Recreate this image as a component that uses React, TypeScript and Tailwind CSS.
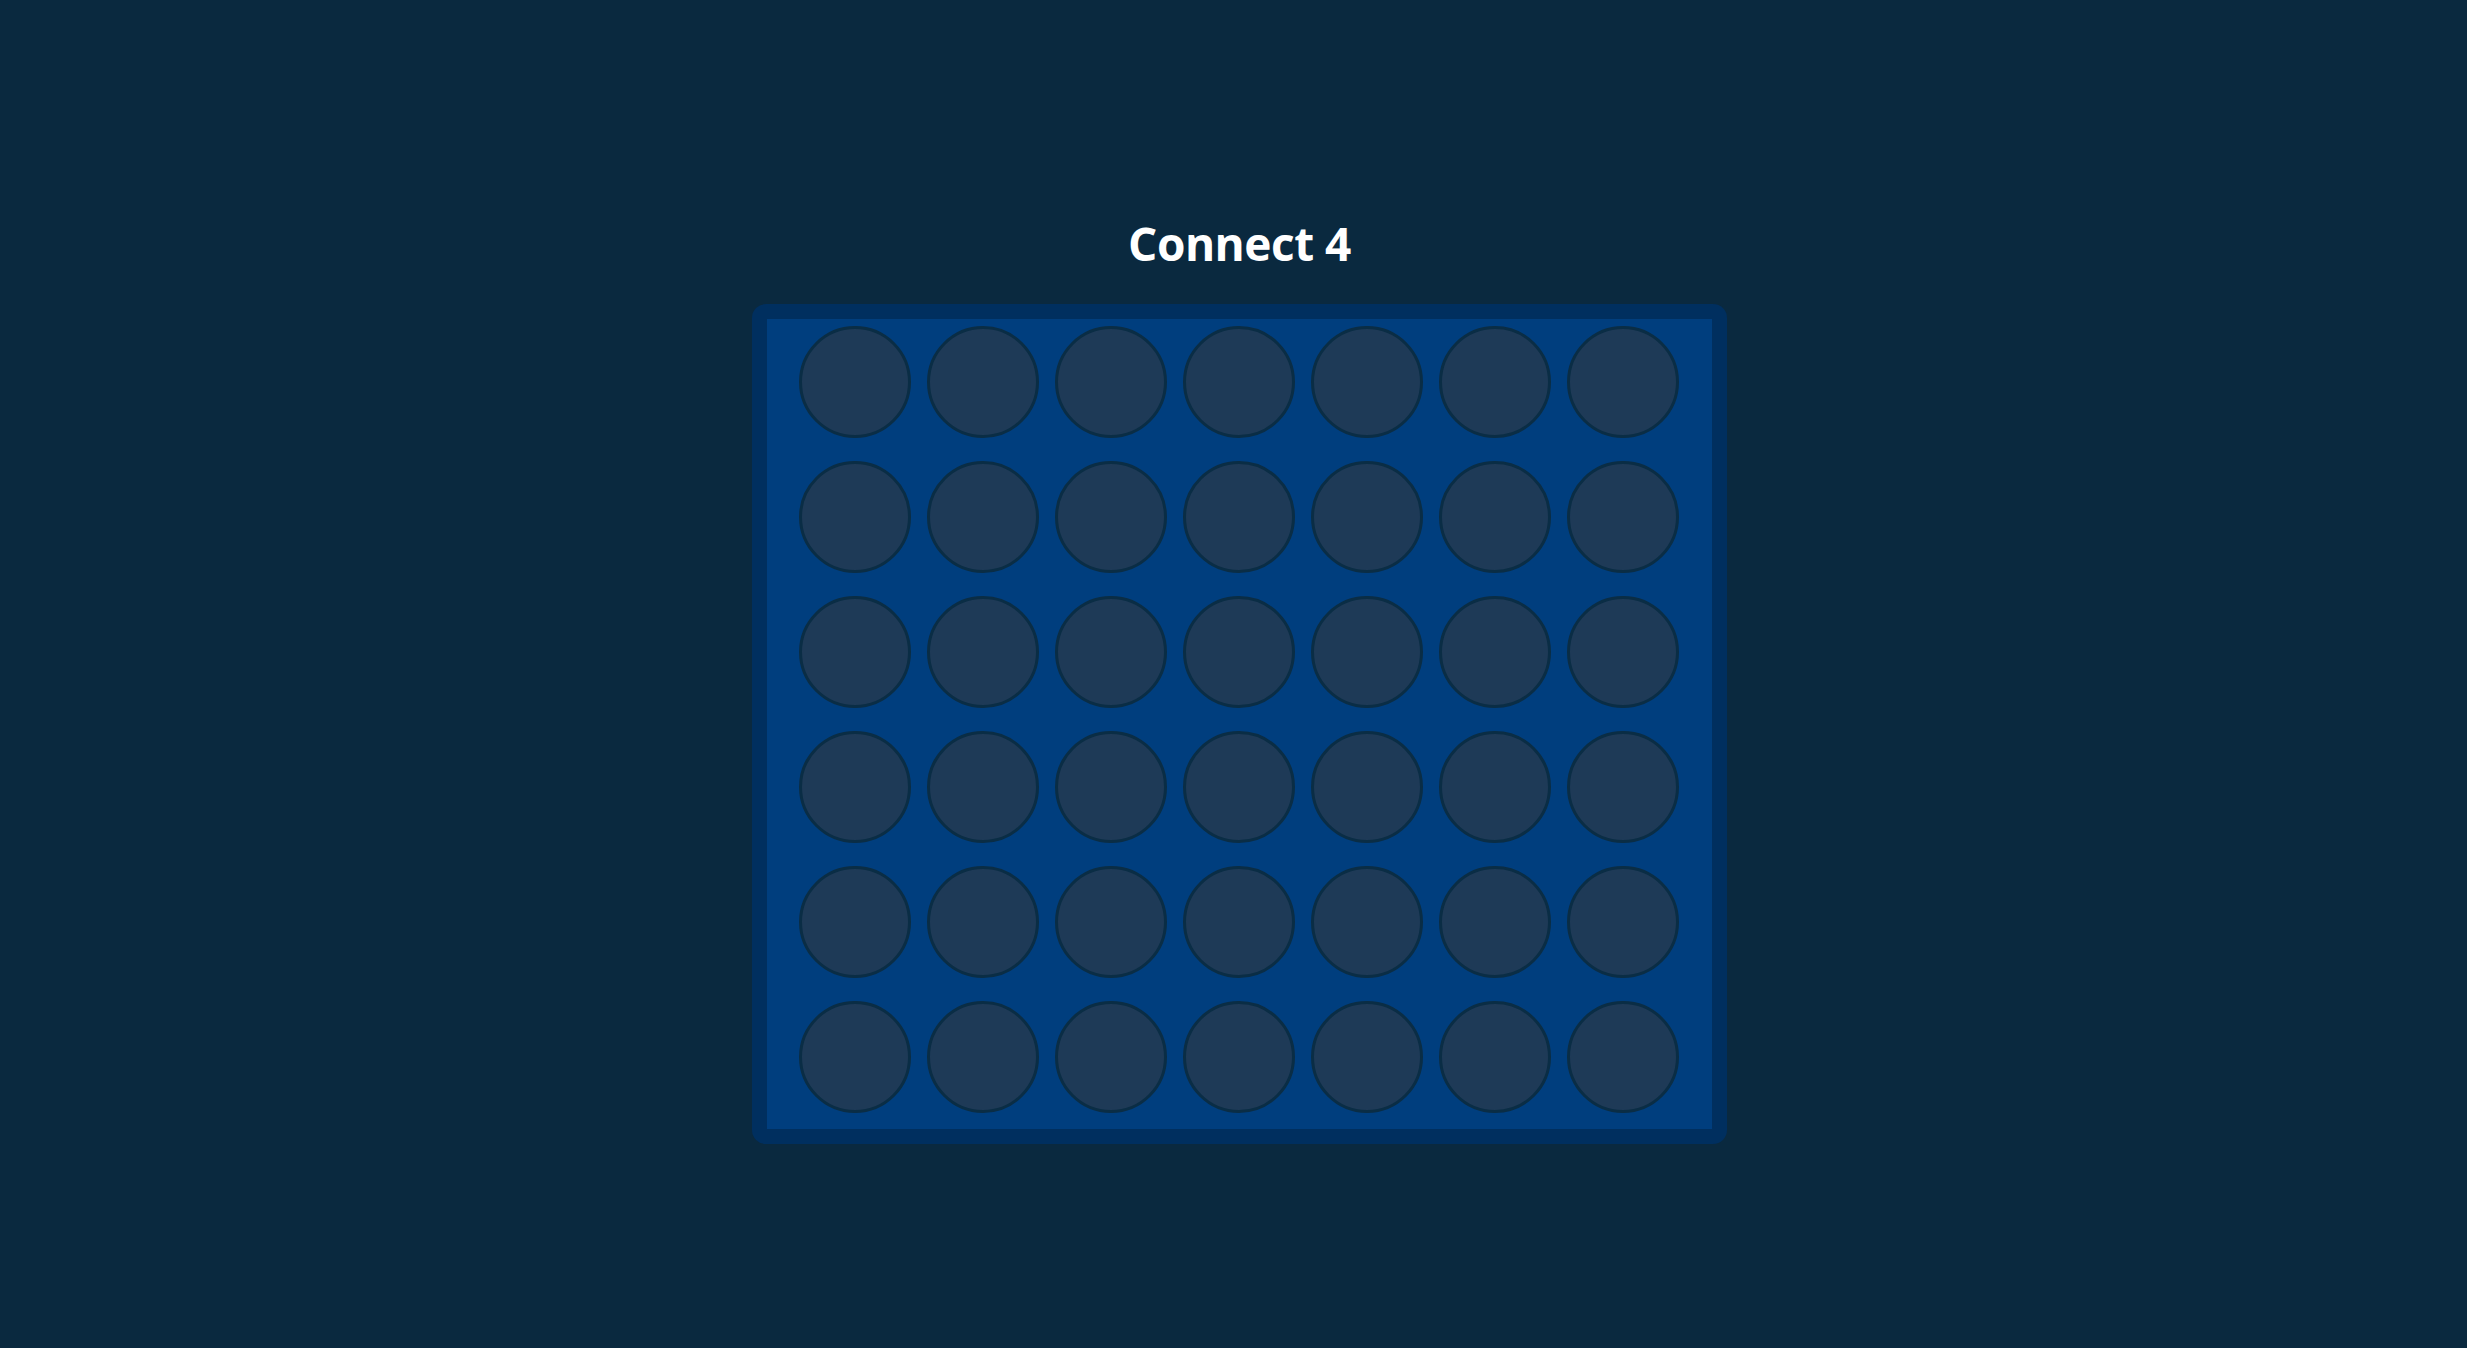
const ROWS = 6;
const COLS = 7;

export default function App() {
  const cells = Array.from({ length: ROWS * COLS }, (_, i) => i);

  return (
    <div
      className="flex h-[1348px] w-full flex-col items-center bg-[#0a293f] pl-[12px] pt-[220px]"
      style={{ fontFamily: '"Open Sans", "Noto Sans", sans-serif' }}
    >
      <h1 className="text-[46px] font-bold leading-none tracking-[-0.5px] text-white">
        Connect 4
      </h1>
      <div className="mt-[38px] rounded-[14px] bg-[#002f5f] p-[15px]">
        <div className="grid grid-cols-7 gap-x-[16px] gap-y-[23px] bg-[#003e7e] pl-[32px] pr-[33px] pt-[7px] pb-[16px]">
          {cells.map((c) => (
            <div
              key={c}
              className="h-[112px] w-[112px] rounded-full border-[3px] border-[#0a2d45] bg-[#1e3a57]"
            />
          ))}
        </div>
      </div>
    </div>
  );
}
